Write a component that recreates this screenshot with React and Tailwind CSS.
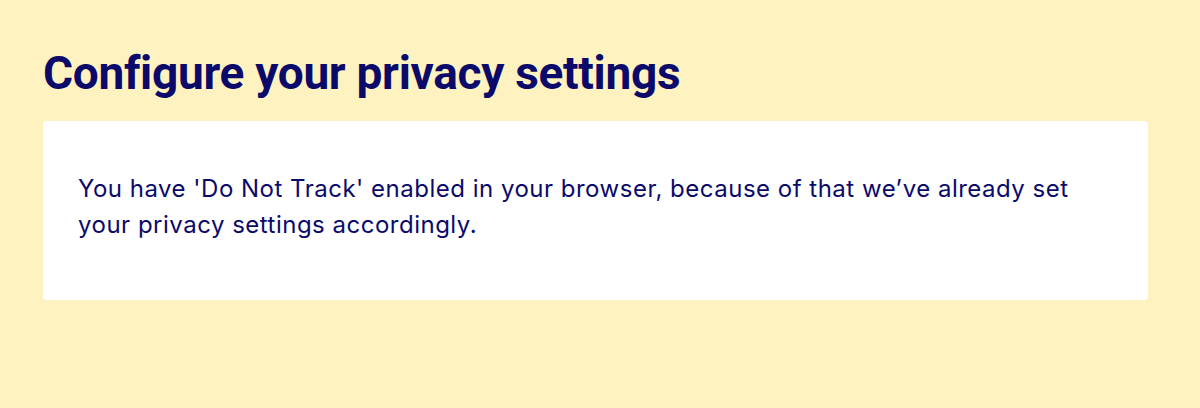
import React from "react";

function App() {
  return (
    <div
      className="min-h-[408px] w-full bg-[#fef3c0] pl-[43px] pr-[52px] pt-[45px]"
      style={{ fontFamily: 'Inter, "Noto Sans", sans-serif' }}
    >
      <h1
        className="text-[46px] font-bold leading-[56px] text-[#0b0a6b] tracking-[-0.3px]"
        style={{ fontFamily: 'Roboto, "Noto Sans", sans-serif' }}
      >
        Configure your privacy settings
      </h1>
      <div className="mt-[20px] rounded-[4px] bg-white pl-[35px] pr-[40px] pt-[50px] pb-[57px]">
        <p className="text-[24px] leading-[36px] tracking-[0.5px] text-[#0b0a6b]">
          You have 'Do Not Track' enabled in your browser, because of that we’ve already set
          your privacy settings accordingly.
        </p>
      </div>
    </div>
  );
}

export default App;
